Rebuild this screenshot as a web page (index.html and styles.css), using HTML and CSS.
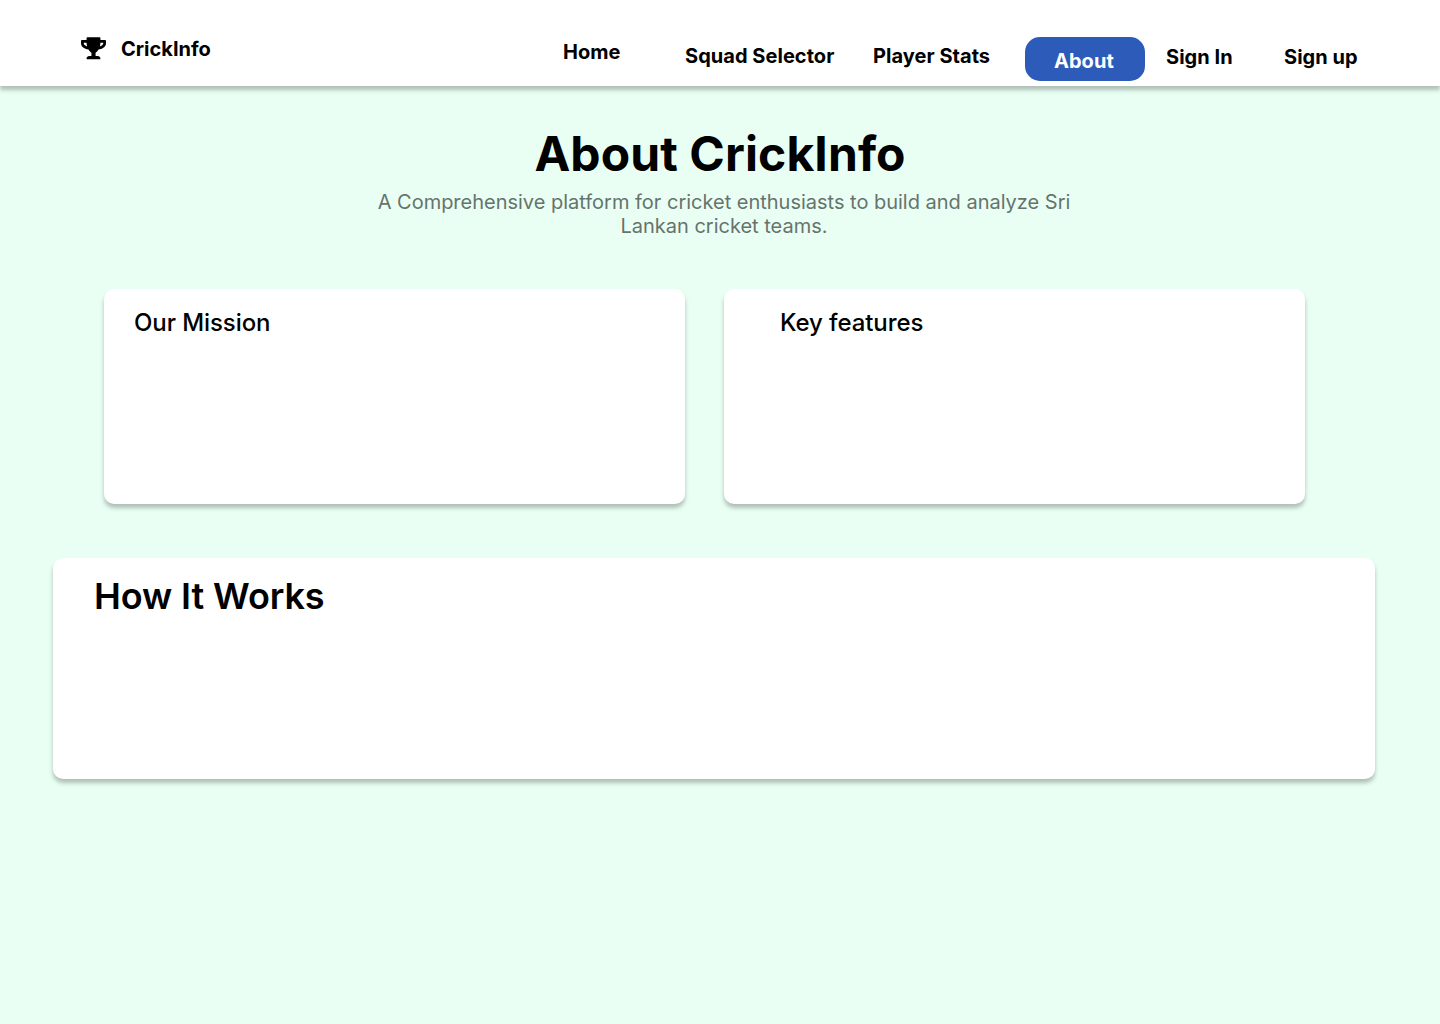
FILE: index.html
```html
<!DOCTYPE html>
<html lang="en">
<head>
  <meta charset="utf-8">
  <title>About CrickInfo</title>
  <link rel="stylesheet" href="styles.css">
</head>
<body>
  <header class="header">
    <div class="brand">
      <svg class="brand-icon" viewBox="0 0 576 512" aria-hidden="true"><path d="M552 64H448V24c0-13.3-10.7-24-24-24H152c-13.3 0-24 10.7-24 24v40H24C10.7 64 0 74.7 0 88v56c0 35.7 22.5 72.4 61.9 100.7 31.5 22.7 69.8 37.1 110 41.7C203.3 338.5 240 360 240 360v72h-48c-35.3 0-64 20.7-64 56v12c0 6.6 5.4 12 12 12h296c6.6 0 12-5.4 12-12v-12c0-35.3-28.7-56-64-56h-48v-72s36.7-21.5 68.1-73.6c40.3-4.6 78.6-19 110-41.7 39.3-28.3 61.9-65 61.9-100.7V88c0-13.3-10.7-24-24-24zM99.3 192.8C74.9 175.2 64 155.6 64 144v-16h64.2c1 32.6 5.8 61.2 12.8 86.2-15.1-5.2-29.2-12.4-41.7-21.4zM512 144c0 16.1-17.7 36.1-35.3 48.8-12.5 9-26.7 16.2-41.8 21.4 7-25 11.8-53.6 12.8-86.2H512v16z"/></svg>
      <span>CrickInfo</span>
    </div>
    <nav class="nav">
      <a class="nav-link home">Home</a>
      <a class="nav-link squad">Squad Selector</a>
      <a class="nav-link stats">Player Stats</a>
      <a class="nav-link active">About</a>
      <a class="nav-link sign-in">Sign In</a>
      <a class="nav-link sign-up">Sign up</a>
    </nav>
  </header>
  <main class="main">
    <h1 class="title">About CrickInfo</h1>
    <p class="subtitle">A Comprehensive platform for cricket enthusiasts to build and analyze Sri<br>Lankan cricket teams.</p>
    <div class="cards">
      <section class="card mission"><h2 class="card-title">Our Mission</h2></section>
      <section class="card features"><h2 class="card-title">Key features</h2></section>
    </div>
    <section class="card how"><h2 class="how-title">How It Works</h2></section>
  </main>
</body>
</html>
```
FILE: styles.css
```css
* { box-sizing: border-box; }
body {
  margin: 0;
  min-height: 1024px;
  background: #eafff4;
  color: #000;
  font-family: Inter, "Liberation Sans", sans-serif;
}
h1, h2, p { margin: 0; }
.header {
  display: flex;
  align-items: flex-start;
  height: 86px;
  padding-left: 81px;
  background: #fff;
  box-shadow: 0 4px 4px rgba(0, 0, 0, .25);
  font-size: 20px;
  font-weight: 700;
  line-height: 24px;
}
.brand {
  display: flex;
  gap: 15px;
  width: 482px;
  padding-top: 37px;
}
.brand-icon { width: 25px; height: 22.5px; }
.nav { display: flex; align-items: flex-start; letter-spacing: .04px; }
.nav-link { white-space: nowrap; }
.home { width: 122px; padding-top: 40px; }
.squad { width: 188px; padding-top: 44px; }
.stats { width: 152px; padding-top: 44px; }
.active {
  width: 120px;
  height: 44px;
  margin: 37px 21px 0 0;
  padding: 12px 0 0 29px;
  border-radius: 15px;
  background: #2d5bb9;
  color: #fff;
}
.sign-in { width: 118px; padding-top: 45px; }
.sign-up { padding-top: 45px; }
.main { padding: 39px 0 0; }
.title {
  font-size: 48px;
  font-weight: 700;
  letter-spacing: .1px;
  line-height: 58px;
  text-align: center;
}
.subtitle {
  margin: 7px 0 0 8px;
  color: #66736d;
  font-size: 20px;
  font-weight: 400;
  letter-spacing: -.01px;
  line-height: 24px;
  text-align: center;
}
.cards {
  display: flex;
  gap: 39px;
  margin: 51px 0 0 104px;
}
.card {
  border-radius: 10px;
  background: #fff;
  box-shadow: 0 4px 4px rgba(0, 0, 0, .25);
}
.mission, .features {
  width: 581px;
  height: 215px;
  padding: 19px 0 0 30px;
}
.features { padding-left: 56px; }
.card-title {
  font-size: 24px;
  font-weight: 500;
  letter-spacing: -.08px;
  line-height: 29px;
}
.how {
  width: 1322px;
  height: 221px;
  margin: 54px 0 0 53px;
  padding: 16px 0 0 41px;
}
.how-title {
  font-size: 36px;
  font-weight: 600;
  letter-spacing: -.1px;
  line-height: 44px;
}
```
